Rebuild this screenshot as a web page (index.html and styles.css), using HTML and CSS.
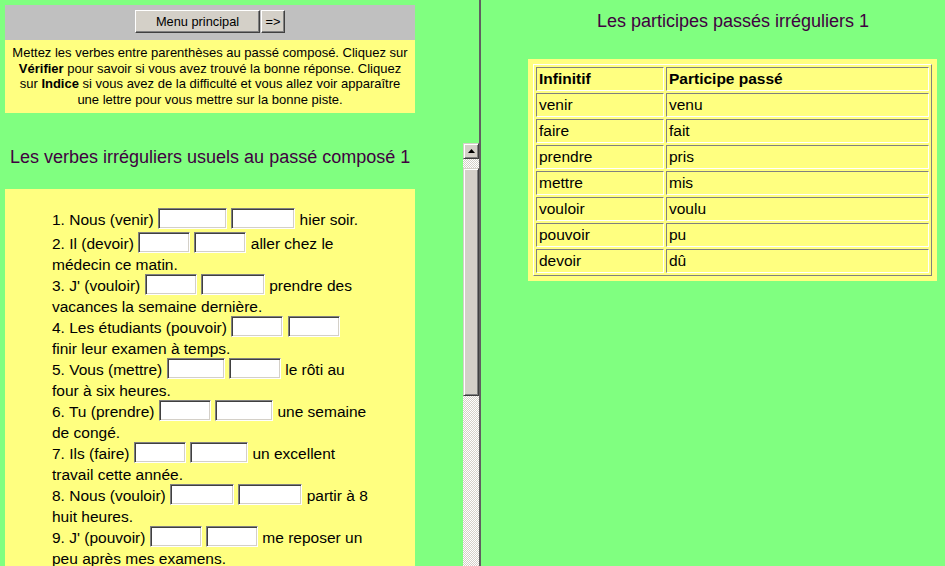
FILE: index.html
```html
<!DOCTYPE html>
<html lang="fr">
<head>
<meta charset="utf-8">
<title>Les verbes irréguliers usuels au passé composé 1</title>
<link rel="stylesheet" href="styles.css">
</head>
<body>
<div class="frames">
  <div class="left-frame">
    <div class="top-frame">
      <div class="menubar">
        <button class="btn btn-menu" type="button">Menu principal</button>
        <button class="btn btn-next" type="button">=&gt;</button>
      </div>
      <div class="instructions">Mettez les verbes entre parenthèses au passé composé. Cliquez sur<br><b>Vérifier</b> pour savoir si vous avez trouvé la bonne réponse. Cliquez<br>sur <b>Indice</b> si vous avez de la difficulté et vous allez voir apparaître<br>une lettre pour vous mettre sur la bonne piste.</div>
    </div>
    <div class="bottom-frame">
      <div class="exercise-view">
        <h1 class="ex-title">Les verbes irréguliers usuels au passé composé 1</h1>
        <div class="ex-box">
          <div class="item item-first">
            <div class="line">1. Nous (venir) <input class="blank w69" type="text"> <input class="blank w64" type="text"> hier soir.</div>
          </div>
          <div class="item">
            <div class="line">2. Il (devoir) <input class="blank w52" type="text"> <input class="blank w52" type="text"> aller chez le</div>
            <div class="line">médecin ce matin.</div>
          </div>
          <div class="item">
            <div class="line">3. J' (vouloir) <input class="blank w52" type="text"> <input class="blank w64" type="text"> prendre des</div>
            <div class="line">vacances la semaine dernière.</div>
          </div>
          <div class="item">
            <div class="line">4. Les étudiants (pouvoir) <input class="blank w52" type="text"> <input class="blank w52" type="text"></div>
            <div class="line">finir leur examen à temps.</div>
          </div>
          <div class="item">
            <div class="line">5. Vous (mettre) <input class="blank w58" type="text"> <input class="blank w52" type="text"> le rôti au</div>
            <div class="line">four à six heures.</div>
          </div>
          <div class="item">
            <div class="line">6. Tu (prendre) <input class="blank w52" type="text"> <input class="blank w58" type="text"> une semaine</div>
            <div class="line">de congé.</div>
          </div>
          <div class="item">
            <div class="line">7. Ils (faire) <input class="blank w52" type="text"> <input class="blank w58" type="text"> un excellent</div>
            <div class="line">travail cette année.</div>
          </div>
          <div class="item">
            <div class="line">8. Nous (vouloir) <input class="blank w64" type="text"> <input class="blank w64" type="text"> partir à 8</div>
            <div class="line">huit heures.</div>
          </div>
          <div class="item">
            <div class="line">9. J' (pouvoir) <input class="blank w52" type="text"> <input class="blank w52" type="text"> me reposer un</div>
            <div class="line">peu après mes examens.</div>
          </div>
        </div>
      </div>
      <div class="scrollbar">
        <div class="sb-btn">
          <svg class="sb-arrow" width="7" height="4" viewBox="0 0 7 4"><path d="M3.5 0L7 4H0Z" fill="#000"/></svg>
        </div>
        <div class="sb-track sb-gap"></div>
        <div class="sb-thumb"></div>
        <div class="sb-track sb-rest"></div>
      </div>
    </div>
  </div>
  <div class="divider"></div>
  <div class="right-frame">
    <div class="right-inner">
      <h2 class="tbl-title">Les participes passés irréguliers 1</h2>
      <div class="tbl-box">
        <table class="pp">
          <tr><th class="col1">Infinitif</th><th>Participe passé</th></tr>
          <tr><td class="col1">venir</td><td>venu</td></tr>
          <tr><td class="col1">faire</td><td>fait</td></tr>
          <tr><td class="col1">prendre</td><td>pris</td></tr>
          <tr><td class="col1">mettre</td><td>mis</td></tr>
          <tr><td class="col1">vouloir</td><td>voulu</td></tr>
          <tr><td class="col1">pouvoir</td><td>pu</td></tr>
          <tr><td class="col1">devoir</td><td>dû</td></tr>
        </table>
      </div>
    </div>
  </div>
</div>
</body>
</html>
```

FILE: styles.css
```css
* { box-sizing: border-box; }

html, body {
  margin: 0;
  padding: 0;
  height: 100%;
}

body {
  background: #80ff80;
  font-family: "Liberation Sans", Arial, sans-serif;
  color: #000;
  overflow: hidden;
}

.frames {
  display: flex;
  height: 566px;
  width: 945px;
}

/* ---------- left frame ---------- */
.left-frame {
  width: 479px;
  display: flex;
  flex-direction: column;
  flex: none;
}

.top-frame {
  height: 143px;
  padding: 5px 0 0 5px;
  flex: none;
}

.menubar {
  width: 410px;
  height: 35px;
  background: #c0c0c0;
  display: flex;
  justify-content: center;
  align-items: flex-start;
  padding-top: 5px;
  gap: 1px;
}

.btn {
  height: 23px;
  margin: 0;
  padding: 0;
  font-family: "Liberation Sans", Arial, sans-serif;
  font-size: 12.8px;
  color: #000;
  background: #d4d0c8;
  border: 1px solid;
  border-color: #fff #404040 #404040 #fff;
  box-shadow: inset -1px -1px 0 #808080;
  border-radius: 0;
}

.btn-menu { width: 125px; }
.btn-next { width: 24px; }

.instructions {
  width: 410px;
  background: #ffff80;
  font-size: 13px;
  line-height: 15.6px;
  text-align: center;
  white-space: nowrap;
  padding: 5px 0 6px;
}

.bottom-frame {
  flex: 1;
  display: flex;
  min-height: 0;
}

.exercise-view {
  flex: 1;
  overflow: hidden;
  padding-top: 4px;
}

.ex-title {
  margin: 0 0 21px 10px;
  font-size: 18px;
  font-weight: normal;
  line-height: 21px;
  color: #400040;
}

.ex-box {
  width: 410px;
  margin-left: 5px;
  background: #ffff80;
  padding: 20px 0 24px 47px;
  font-size: 15.5px;
  line-height: 21px;
}

.item-first { margin-bottom: 2.5px; }

.line { white-space: nowrap; }

.blank {
  height: 21px;
  margin: -1px 0 0;
  padding: 0 2px;
  background: #fff;
  border: 1px solid;
  border-color: #808080 #fff #fff #808080;
  box-shadow: inset 1px 1px 0 #404040, inset -1px -1px 0 #d4d0c8;
  font: 13px "Liberation Sans", Arial, sans-serif;
  vertical-align: top;
  border-radius: 0;
  outline: none;
}
.w52 { width: 52px; }
.w58 { width: 58px; }
.w64 { width: 64px; }
.w69 { width: 69px; }

/* scrollbar */
.scrollbar {
  width: 16px;
  flex: none;
  display: flex;
  flex-direction: column;
}

.sb-btn {
  height: 16px;
  flex: none;
  background: #d4d0c8;
  border: 1px solid;
  border-color: #d4d0c8 #404040 #404040 #d4d0c8;
  box-shadow: inset 1px 1px 0 #fff, inset -1px -1px 0 #808080;
  display: flex;
  align-items: center;
  justify-content: center;
}

.sb-arrow { display: block; }

.sb-track {
  background: repeating-conic-gradient(#fff 0 25%, #d4d0c8 0 50%) 0 0 / 2px 2px;
}

.sb-gap { height: 9px; flex: none; }

.sb-thumb {
  height: 228px;
  flex: none;
  background: #d4d0c8;
  border: 1px solid;
  border-color: #d4d0c8 #404040 #404040 #d4d0c8;
  box-shadow: inset 1px 1px 0 #fff, inset -1px -1px 0 #808080;
}

.sb-rest { flex: 1; }

.divider {
  width: 2px;
  flex: none;
  background: #606060;
}

/* ---------- right frame ---------- */
.right-frame {
  flex: 1;
  min-width: 0;
}

.right-inner {
  width: 410px;
  margin-left: 47px;
  padding-top: 11px;
}

.tbl-title {
  margin: 0 0 27px;
  font-size: 18px;
  font-weight: normal;
  line-height: 21px;
  text-align: center;
  color: #400040;
}

.tbl-box {
  width: 409px;
  background: #ffff80;
  padding: 5px;
}

.pp {
  width: 399px;
  border-collapse: separate;
  border-spacing: 2px;
  border: 1px solid;
  border-color: #fff #808080 #808080 #fff;
  font-size: 15.5px;
}

.pp th, .pp td {
  height: 24px;
  padding: 0 2px;
  text-align: left;
  vertical-align: middle;
  border: 1px solid;
  border-color: #808080 #fff #fff #808080;
  line-height: 22px;
}

.pp th { font-weight: bold; }
.pp .col1 { width: 128px; }
```
